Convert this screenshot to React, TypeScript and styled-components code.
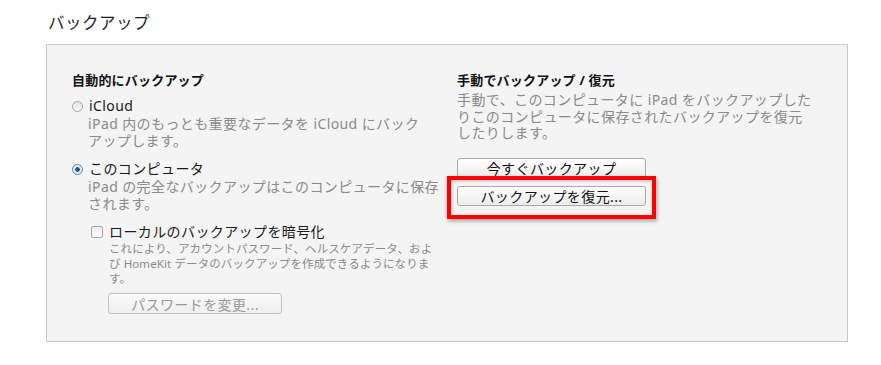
import styled, { createGlobalStyle } from "styled-components";

const GlobalStyle = createGlobalStyle`
  html, body {
    margin: 0;
    padding: 0;
    background: #ffffff;
  }

  body {
    font-family: "Noto Sans", "Noto Sans CJK JP", sans-serif;
    color: #1a1a1a;
  }
`;

export default function App() {
  return (
    <>
      <GlobalStyle />
      <Page>
        <Title>バックアップ</Title>

        <Panel>
          <Column>
            <Heading>自動的にバックアップ</Heading>

            <OptionRow $gap={8}>
              <Radio />
              <OptionLabel>iCloud</OptionLabel>
            </OptionRow>
            <Description $indent={16} $gap={1}>
              iPad 内のもっとも重要なデータを iCloud にバック
              <br />
              アップします。
            </Description>

            <OptionRow $gap={11}>
              <Radio $checked />
              <OptionLabel>このコンピュータ</OptionLabel>
            </OptionRow>
            <Description $indent={16} $gap={1}>
              iPad の完全なバックアップはこのコンピュータに保存
              <br />
              されます。
            </Description>

            <CheckRow>
              <Checkbox />
              <OptionLabel>ローカルのバックアップを暗号化</OptionLabel>
            </CheckRow>
            <SmallText>
              これにより、アカウントパスワード、ヘルスケアデータ、およ
              <br />
              び HomeKit データのバックアップを作成できるようになりま
              <br />
              す。
            </SmallText>

            <PasswordButton disabled>パスワードを変更...</PasswordButton>
          </Column>

          <Column>
            <Heading>手動でバックアップ / 復元</Heading>
            <Description $indent={0} $gap={3}>
              手動で、このコンピュータに iPad をバックアップした
              <br />
              りこのコンピュータに保存されたバックアップを復元
              <br />
              したりします。
            </Description>

            <ButtonStack>
              <Button>今すぐバックアップ</Button>
              <Highlighted>
                <Button>バックアップを復元...</Button>
                <RedFrame />
              </Highlighted>
            </ButtonStack>
          </Column>
        </Panel>
      </Page>
    </>
  );
}

const Page = styled.div`
  padding: 12px 0 0 46px;
`;

const Title = styled.div`
  padding-left: 2px;
  font-size: 16.5px;
  line-height: 22px;
  letter-spacing: 0.5px;
  color: #1e1e1e;
`;

const Panel = styled.div`
  display: grid;
  grid-template-columns: 385px 1fr;
  box-sizing: border-box;
  width: 802px;
  height: 298px;
  margin-top: 10px;
  padding: 26px 0 0 25px;

  background: #f4f4f4;
  border: 1px solid #c8c8c8;
`;

const Column = styled.div`
  display: flex;
  flex-direction: column;
  align-items: flex-start;
`;

const Heading = styled.div`
  font-size: 13px;
  font-weight: 700;
  line-height: 18px;
  letter-spacing: 0.2px;
  color: #111111;
`;

const OptionRow = styled.div<{ $gap: number }>`
  display: flex;
  align-items: center;
  gap: 6px;
  margin-top: ${(p) => p.$gap}px;
  height: 18px;
`;

const OptionLabel = styled.span`
  font-size: 14px;
  line-height: 18px;
  letter-spacing: 0.4px;
  color: #1a1a1a;
  white-space: nowrap;
`;

const Radio = styled.span<{ $checked?: boolean }>`
  box-sizing: border-box;
  width: 11px;
  height: 11px;
  border-radius: 50%;
  border: 1px solid ${(p) => (p.$checked ? "#5b7fa8" : "#a2a2a2")};
  background: ${(p) =>
    p.$checked
      ? "radial-gradient(circle, #2c4f7c 0 2px, #d7e6f5 2.5px, #f4f8fc 100%)"
      : "linear-gradient(#e6e6e6, #fbfbfb)"};
`;

const Description = styled.div<{ $indent: number; $gap: number }>`
  margin-top: ${(p) => p.$gap}px;
  padding-left: ${(p) => p.$indent}px;
  font-size: 14px;
  line-height: 16.5px;
  letter-spacing: 0.4px;
  color: #8a8a8a;
  white-space: nowrap;
`;

const CheckRow = styled.div`
  display: flex;
  align-items: center;
  gap: 6px;
  height: 18px;
  margin-top: 11px;
  padding-left: 19px;
`;

const Checkbox = styled.span`
  box-sizing: border-box;
  width: 12px;
  height: 12px;
  border: 1px solid #a6a6a6;
  border-radius: 2px;
  background: linear-gradient(#ececec, #fdfdfd);
`;

const SmallText = styled.div`
  margin-top: 0;
  padding-left: 37px;
  font-size: 11.5px;
  line-height: 15px;
  letter-spacing: 0.1px;
  color: #8a8a8a;
  white-space: nowrap;
`;

const Button = styled.button`
  display: flex;
  align-items: center;
  justify-content: center;
  box-sizing: border-box;
  width: 189px;
  height: 20px;
  padding: 0;

  font-family: "Noto Sans", "Noto Sans CJK JP", sans-serif;
  font-size: 14px;
  letter-spacing: 0.4px;
  color: #111111;

  background: linear-gradient(#ffffff, #ececec);
  border: 1px solid #a8a8a8;
  border-radius: 3px;

  &:disabled {
    color: #9a9a9a;
    border-color: #c4c4c4;
    background: linear-gradient(#fafafa, #efefef);
  }
`;

const PasswordButton = styled(Button)`
  width: 174px;
  height: 21px;
  margin-top: 7px;
  margin-left: 36px;
`;

const ButtonStack = styled.div`
  display: flex;
  flex-direction: column;
  gap: 8px;
  margin-top: 16px;
`;

const Highlighted = styled.div`
  position: relative;
`;

const RedFrame = styled.div`
  position: absolute;
  top: -10px;
  left: -10px;
  right: -10px;
  bottom: -13px;
  border: 4px solid #ff0000;
  box-shadow: 1px 2px 4px rgba(0, 0, 0, 0.35),
    inset 1px 1px 3px rgba(0, 0, 0, 0.25);
  pointer-events: none;
`;
